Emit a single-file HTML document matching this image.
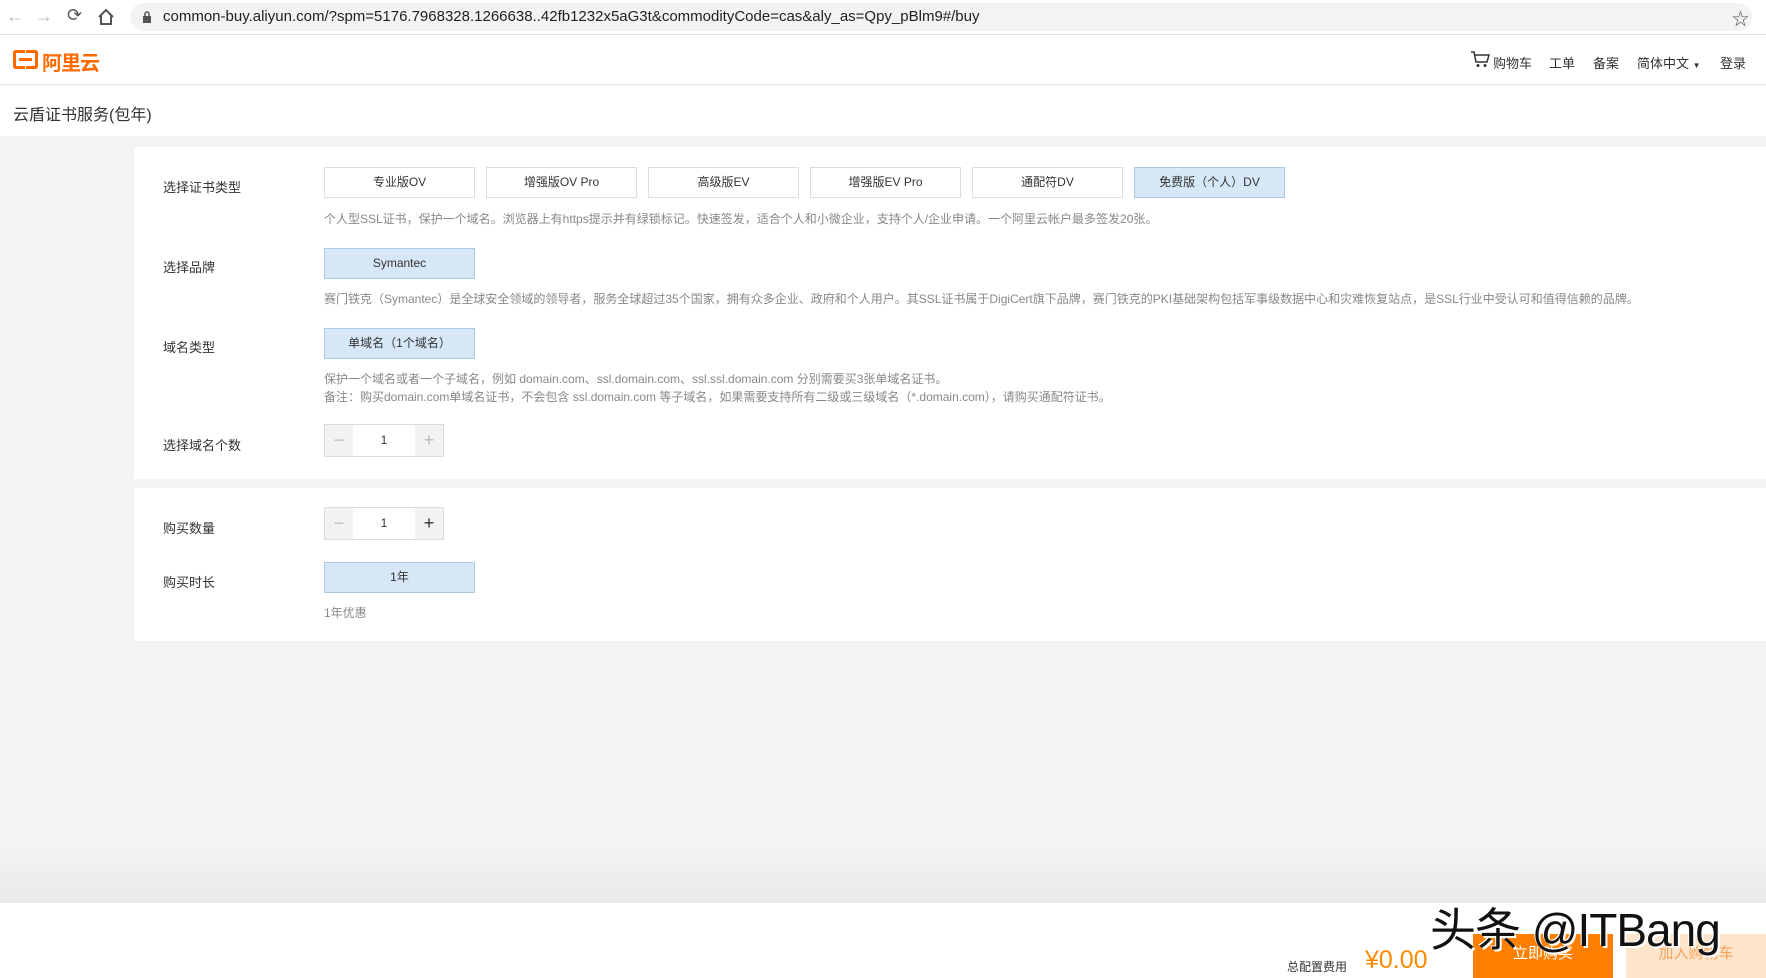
<!DOCTYPE html>
<html><head><meta charset="utf-8"><style>
*{margin:0;padding:0;box-sizing:border-box}
body{width:1766px;height:978px;overflow:hidden;background:#f2f3f5;font-family:"Liberation Sans","Noto Sans CJK SC",sans-serif;color:#333;position:relative}
.abs{position:absolute}
.chrome{left:0;top:0;width:1766px;height:35px;background:#fff;border-bottom:1px solid #dadce0}
.pill{left:130px;top:3px;width:1622px;height:28px;background:#f1f3f4;border-radius:14px}
.url{left:163px;top:8px;font-size:15px;color:#202124;white-space:nowrap}
.hdr{left:0;top:35px;width:1766px;height:50px;background:#fff;border-bottom:1px solid #e6e6e6}
.ttl{left:0;top:86px;width:1766px;height:50px;background:#fff}
.nav{top:53px;font-size:13px;color:#333}
.panel{background:#fff;left:134px;width:1632px}
.lbl{left:163px;font-size:13px;color:#333}
.btn{position:absolute;width:151px;height:31px;border:1px solid #ddd;background:#fff;font-size:12px;color:#333;text-align:center;line-height:29px}
.sel{background:#d6e8f7;border-color:#a9cbe6}
.desc{left:324px;font-size:12px;color:#888;white-space:nowrap}
.cnt{position:absolute;left:324px;width:120px;height:33px;border:1px solid #ddd;background:#fff}
.cnt .m,.cnt .p{position:absolute;top:0;width:28px;height:31px;background:#f2f2f2;text-align:center;line-height:30px;font-size:18px;color:#bbb}
.cnt .m{left:0}.cnt .p{right:0}
.cnt .v{position:absolute;left:28px;right:28px;text-align:center;line-height:31px;font-size:12px}
</style></head><body>
<div class="abs chrome"></div>
<div class="abs" style="left:6px;top:6px;font-size:18px;color:#bbb">←</div>
<div class="abs" style="left:35px;top:6px;font-size:18px;color:#bbb">→</div>
<div class="abs" style="left:67px;top:5px;font-size:18px;color:#555">⟳</div>
<svg class="abs" style="left:97px;top:8px" width="18" height="18" viewBox="0 0 18 18"><path d="M2 9L9 2l7 7M4 7v9h10V7" fill="none" stroke="#555" stroke-width="2"/></svg>
<div class="abs pill"></div>
<svg class="abs" style="left:142px;top:11px" width="10" height="12" viewBox="0 0 10 12"><rect x="1" y="5" width="8" height="7" fill="#555"/><path d="M3 5V3a2 2 0 0 1 4 0v2" stroke="#555" fill="none" stroke-width="1.5"/></svg>
<div class="abs url">common-buy.aliyun.com/?spm=5176.7968328.1266638..42fb1232x5aG3t&amp;commodityCode=cas&amp;aly_as=Qpy_pBlm9#/buy</div>
<div class="abs" style="left:1732px;top:5px;font-size:17px;color:#555">☆</div>

<div class="abs hdr"></div>
<div class="abs" style="left:13px;top:50px;width:12px;height:19px;border:3px solid #ff6a00;border-right:none;border-radius:3px 0 0 3px"></div>
<div class="abs" style="left:19px;top:58px;width:13px;height:3px;background:#ff6a00"></div>
<div class="abs" style="left:26px;top:50px;width:12px;height:19px;border:3px solid #ff6a00;border-left:none;border-radius:0 3px 3px 0"></div>
<div class="abs" style="left:42px;top:47px;font-size:20px;font-weight:bold;color:#ff6a00;letter-spacing:-1px">阿里云</div>
<svg class="abs" style="left:1470px;top:50px" width="20" height="18" viewBox="0 0 20 18"><path d="M1 2h3l2 10h11l2-7H5" fill="none" stroke="#333" stroke-width="1.5"/><circle cx="8" cy="15.5" r="1.5" fill="#333"/><circle cx="15" cy="15.5" r="1.5" fill="#333"/></svg>
<div class="abs nav" style="left:1493px">购物车</div>
<div class="abs nav" style="left:1549px">工单</div>
<div class="abs nav" style="left:1593px">备案</div>
<div class="abs nav" style="left:1637px">简体中文 <span style="font-size:8px">▼</span></div>
<div class="abs nav" style="left:1720px">登录</div>

<div class="abs ttl"></div>
<div class="abs" style="left:13px;top:101px;font-size:16px;color:#333">云盾证书服务(包年)</div>

<div class="abs panel" style="top:147px;height:332px"></div>
<div class="abs lbl" style="top:177px">选择证书类型</div>
<div class="btn" style="left:324px;top:167px">专业版OV</div>
<div class="btn" style="left:486px;top:167px">增强版OV Pro</div>
<div class="btn" style="left:648px;top:167px">高级版EV</div>
<div class="btn" style="left:810px;top:167px">增强版EV Pro</div>
<div class="btn" style="left:972px;top:167px">通配符DV</div>
<div class="btn sel" style="left:1134px;top:167px">免费版（个人）DV</div>
<div class="abs desc" style="top:210px">个人型SSL证书，保护一个域名。浏览器上有https提示并有绿锁标记。快速签发，适合个人和小微企业，支持个人/企业申请。一个阿里云帐户最多签发20张。</div>

<div class="abs lbl" style="top:257px">选择品牌</div>
<div class="btn sel" style="left:324px;top:248px">Symantec</div>
<div class="abs desc" style="top:290px">赛门铁克（Symantec）是全球安全领域的领导者，服务全球超过35个国家，拥有众多企业、政府和个人用户。其SSL证书属于DigiCert旗下品牌，赛门铁克的PKI基础架构包括军事级数据中心和灾难恢复站点，是SSL行业中受认可和值得信赖的品牌。</div>

<div class="abs lbl" style="top:337px">域名类型</div>
<div class="btn sel" style="left:324px;top:328px">单域名（1个域名）</div>
<div class="abs desc" style="top:370px">保护一个域名或者一个子域名，例如 domain.com、ssl.domain.com、ssl.ssl.domain.com 分别需要买3张单域名证书。</div>
<div class="abs desc" style="top:388px">备注：购买domain.com单域名证书，不会包含 ssl.domain.com 等子域名，如果需要支持所有二级或三级域名（*.domain.com），请购买通配符证书。</div>

<div class="abs lbl" style="top:435px">选择域名个数</div>
<div class="cnt" style="top:424px"><div class="m">−</div><div class="v">1</div><div class="p">+</div></div>

<div class="abs panel" style="top:488px;height:153px"></div>
<div class="abs lbl" style="top:518px">购买数量</div>
<div class="cnt" style="top:507px"><div class="m">−</div><div class="v">1</div><div class="p" style="color:#333">+</div></div>
<div class="abs lbl" style="top:572px">购买时长</div>
<div class="btn sel" style="left:324px;top:562px">1年</div>
<div class="abs desc" style="top:604px">1年优惠</div>

<div class="abs" style="left:0;top:850px;width:1766px;height:53px;background:linear-gradient(#f2f3f5,#e8e9eb)"></div>
<div class="abs" style="left:0;top:903px;width:1766px;height:75px;background:#fff"></div>
<div class="abs" style="left:1287px;top:958px;font-size:12px;color:#333">总配置费用</div>
<div class="abs" style="left:1365px;top:946px;font-size:25px;color:#ff8a00">¥0.00</div>
<div class="abs" style="left:1473px;top:934px;width:140px;height:44px;background:#ff8000;color:#fff;font-size:15px;text-align:center;line-height:40px">立即购买</div>
<div class="abs" style="left:1626px;top:934px;width:140px;height:44px;background:#fde5cc;color:#f7a25a;font-size:15px;text-align:center;line-height:40px">加入购物车</div>
<div class="abs" style="left:1430px;top:894px;font-size:46px;color:#111;white-space:nowrap;text-shadow:2px 2px 0 #fff,-1px -1px 0 #fff;letter-spacing:-1px">头条 @ITBang</div>
</body></html>
